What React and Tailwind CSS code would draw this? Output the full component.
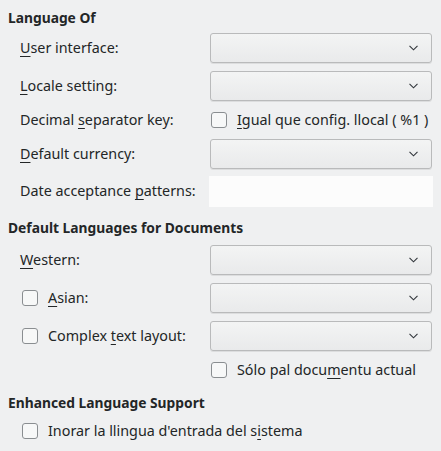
import React from "react";

// Combo box with the small chevron on the right
const Combo = () => (
  <div className="flex h-[30px] w-[222px] items-center justify-end rounded-[3px] border border-[#b9babb] bg-gradient-to-b from-[#f3f4f4] to-[#e9eaeb] pr-[13px] shadow-[0_1px_0_rgba(0,0,0,0.08)]">
    <svg width="9" height="6" viewBox="0 0 9 6" className="text-[#31363b]">
      <path d="M0.5 0.8 L4.5 4.8 L8.5 0.8" fill="none" stroke="currentColor" strokeWidth="1.1" />
    </svg>
  </div>
);

const Check = () => (
  <span className="block h-[16px] w-[16px] shrink-0 rounded-[3px] border border-[#8a8e91] bg-[#f7f8f8]" />
);

const Key = ({ children }) => (
  <span className="underline decoration-1 underline-offset-[3px]">{children}</span>
);

const Heading = ({ children, className = "" }) => (
  <div className={"flex h-[20px] items-center pl-[8px] text-[13.8px] font-bold " + className}>{children}</div>
);

const Row = ({ label, h = "h-[30px]", children, className = "" }) => (
  <div className={"flex items-center " + h + " " + className}>
    <div className="w-[190px] shrink-0">{label}</div>
    {children}
  </div>
);

const App = () => {
  return (
    <div
      className="h-[451px] w-[441px] overflow-hidden bg-[#eff0f1] text-[14.33px] leading-none text-[#232627]"
      style={{ fontFamily: '"Noto Sans", sans-serif' }}
    >
      <Heading className="mt-[8px]">Language Of</Heading>
      <div className="mt-[5px] flex flex-col pl-[20px]">
        <Row label={<span><Key>U</Key>ser interface:</span>}>
          <Combo />
        </Row>
        <Row label={<span><Key>L</Key>ocale setting:</span>} className="mt-[8px]">
          <Combo />
        </Row>
        <Row label={<span>Decimal <Key>s</Key>eparator key:</span>} h="h-[22px]" className="mt-[8px]">
          <div className="ml-[1px] flex items-center gap-[10px]">
            <Check />
            <span><Key>I</Key>gual que config. llocal ( %1 )</span>
          </div>
        </Row>
        <Row label={<span><Key>D</Key>efault currency:</span>} className="mt-[8px]">
          <Combo />
        </Row>
        <Row label={<span>Date acceptance <Key>p</Key>atterns:</span>} h="h-[31px]" className="mt-[7px]">
          <div className="-ml-[1px] h-[31px] w-[224px] bg-[#fcfcfc]" />
        </Row>
      </div>

      <Heading className="mt-[11px]">Default Languages for Documents</Heading>
      <div className="mt-[7px] flex flex-col pl-[20px]">
        <Row label={<span><Key>W</Key>estern:</span>}>
          <Combo />
        </Row>
        <Row
          label={
            <div className="ml-[2px] flex items-center gap-[10px]">
              <Check />
              <span><Key>A</Key>sian:</span>
            </div>
          }
          className="mt-[8px]"
        >
          <Combo />
        </Row>
        <Row
          label={
            <div className="ml-[2px] flex items-center gap-[10px]">
              <Check />
              <span>Complex <Key>t</Key>ext layout:</span>
            </div>
          }
          className="mt-[8px]"
        >
          <Combo />
        </Row>
        <Row label={null} h="h-[22px]" className="mt-[8px]">
          <div className="ml-[1px] flex items-center gap-[10px]">
            <Check />
            <span>Sólo pal docu<Key>m</Key>entu actual</span>
          </div>
        </Row>
      </div>

      <Heading className="mt-[12px]">Enhanced Language Support</Heading>
      <div className="ml-[22px] mt-[7px] flex h-[22px] items-center gap-[10px]">
        <Check />
        <span>Inorar la llingua d'entrada del s<Key>i</Key>stema</span>
      </div>
    </div>
  );
};

export default App;
